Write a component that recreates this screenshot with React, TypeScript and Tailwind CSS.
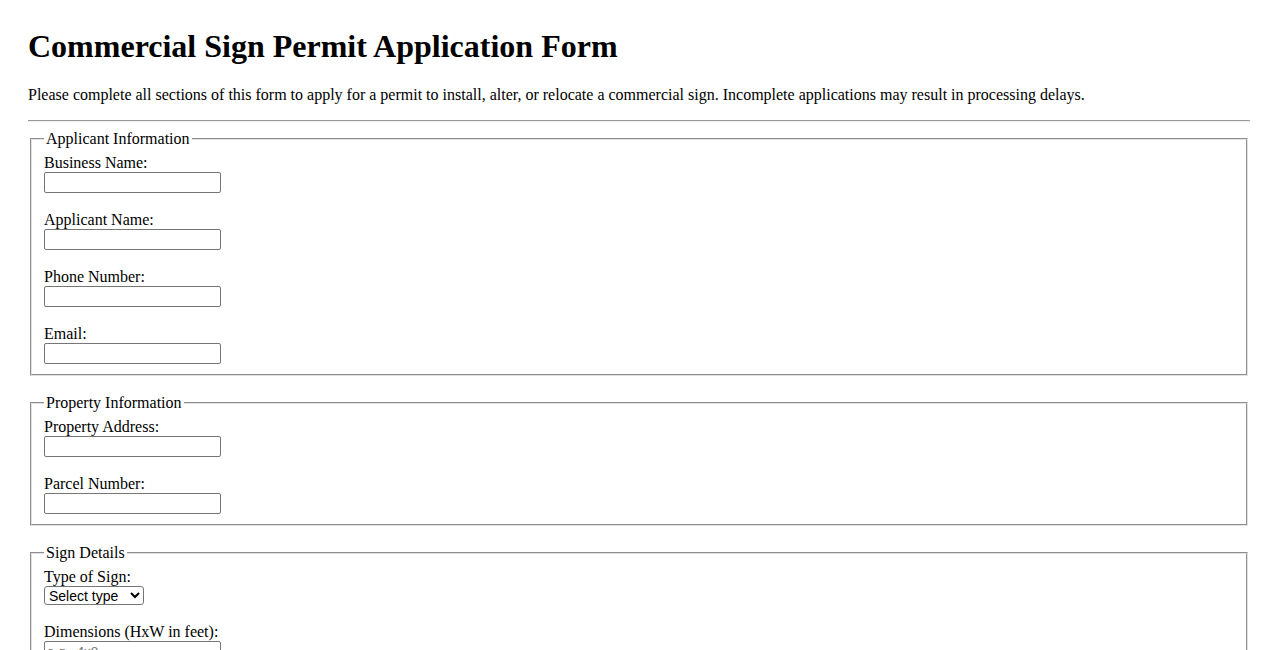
import type { ReactNode } from 'react';

const SECTIONS = [
  {
    legend: 'Applicant Information',
    fields: [
      { label: 'Business Name:', name: 'business' },
      { label: 'Applicant Name:', name: 'applicant' },
      { label: 'Phone Number:', name: 'phone' },
      { label: 'Email:', name: 'email' },
    ],
  },
  {
    legend: 'Property Information',
    fields: [
      { label: 'Property Address:', name: 'address' },
      { label: 'Parcel Number:', name: 'parcel' },
    ],
  },
];

function Field({ label, children }: { label: string; children: ReactNode }) {
  return (
    <div className="mb-[18px] last:mb-0">
      <label className="block leading-[18px]">{label}</label>
      <div className="flex">{children}</div>
    </div>
  );
}

function TextInput({ name, placeholder }: { name: string; placeholder?: string }) {
  return (
    <input
      type="text"
      name={name}
      placeholder={placeholder}
      className="w-[177px] h-[21px] px-[2px] border border-[#767676] rounded-[2px] bg-white font-['Liberation_Sans',Arial,sans-serif] text-[13.33px] placeholder:text-[#757575]"
    />
  );
}

function Section({ legend, children }: { legend: string; children: ReactNode }) {
  return (
    <fieldset className="mx-[2px] mb-[18px] border-2 [border-style:groove] border-[#e2e2e2] px-[12px] pt-[6px] pb-[10px]">
      <legend className="px-[2px] leading-[18px]">{legend}</legend>
      {children}
    </fieldset>
  );
}

export default function App() {
  return (
    <div className="min-h-screen bg-white text-black font-['Liberation_Serif','Times_New_Roman',serif] text-[16px] px-[28px] pt-[28px]">
      <h1 className="text-[32px] leading-[37px] font-bold mb-[21px]">Commercial Sign Permit Application Form</h1>
      <p className="leading-[18px] mb-[16px]">
        Please complete all sections of this form to apply for a permit to install, alter, or relocate a commercial sign.
        Incomplete applications may result in processing delays.
      </p>
      <hr className="h-0 border-t border-b border-t-[#9a9a9a] border-b-[#eeeeee] mb-[8px]" />

      <form>
        {SECTIONS.map(s => (
          <Section key={s.legend} legend={s.legend}>
            {s.fields.map(f => (
              <Field key={f.name} label={f.label}>
                <TextInput name={f.name} />
              </Field>
            ))}
          </Section>
        ))}

        <Section legend="Sign Details">
          <Field label="Type of Sign:">
            <select
              name="type"
              defaultValue=""
              className="w-[100px] h-[19px] border border-[#767676] rounded-[3px] bg-white text-black font-['Liberation_Sans',Arial,sans-serif] text-[14px]"
            >
              <option value="">Select type</option>
              <option value="wall">Wall</option>
              <option value="monument">Monument</option>
              <option value="pole">Pole</option>
              <option value="projecting">Projecting</option>
            </select>
          </Field>
          <Field label="Dimensions (HxW in feet):">
            <TextInput name="dimensions" placeholder="e.g., 4x8" />
          </Field>
        </Section>
      </form>
    </div>
  );
}
